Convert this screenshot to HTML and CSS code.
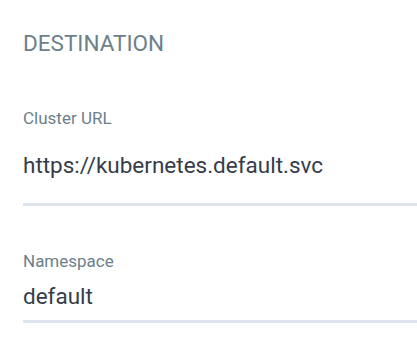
FILE: index.html
```html
<!DOCTYPE html>
<html>
<head>
<meta charset="utf-8">
<link rel="stylesheet" href="styles.css">
</head>
<body>
<section class="panel">
  <h4 class="panel-title">DESTINATION</h4>
  <div class="field field-url">
    <label class="field-label">Cluster URL</label>
    <div class="field-value">https://kubernetes.default.svc</div>
  </div>
  <div class="field field-ns">
    <label class="field-label">Namespace</label>
    <div class="field-value">default</div>
  </div>
</section>
</body>
</html>
```
FILE: styles.css
```css
html, body {
  margin: 0;
  padding: 0;
  background: #ffffff;
}
.panel {
  font-family: Roboto, "Liberation Sans", sans-serif;
  padding: 30px 0 0 23px;
}
.panel-title {
  margin: 0;
  font-size: 22.5px;
  line-height: 26px;
  font-weight: 400;
  color: #6d7f8b;
}
.field {
  display: flex;
  flex-direction: column;
}
.field-label {
  font-size: 17px;
  line-height: 20px;
  color: #6d7f8b;
}
.field-value {
  font-size: 22.5px;
  line-height: 26px;
  color: #363c4a;
  border-bottom: 3px solid #dee4eb;
}
.field-url {
  margin-top: 52px;
}
.field-url .field-value {
  margin-top: 24px;
  padding-bottom: 25px;
}
.field-ns {
  margin-top: 45px;
}
.field-ns .field-value {
  margin-top: 12px;
  padding-bottom: 11px;
}
```
